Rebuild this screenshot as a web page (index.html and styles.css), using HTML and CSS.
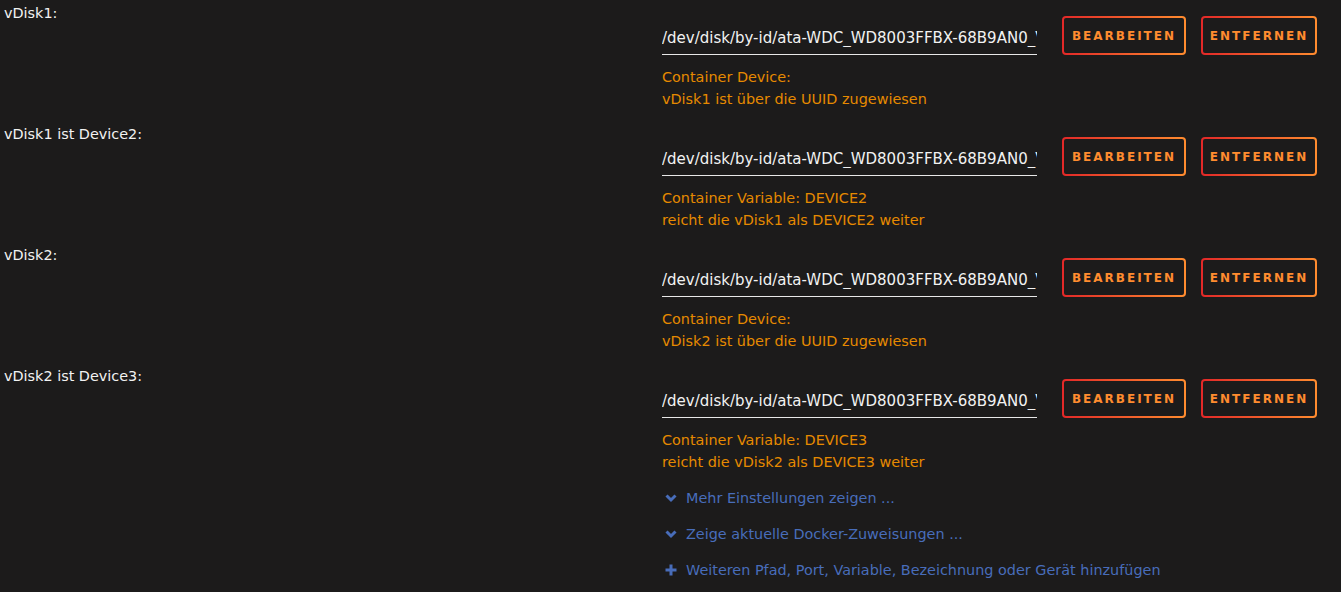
FILE: index.html
```html
<!DOCTYPE html>
<html lang="de">
<head>
    <meta charset="UTF-8">
    <meta name="viewport" content="width=device-width, initial-scale=1.0">
    <title>Docker Container bearbeiten</title>
    <link rel="stylesheet" href="styles.css">
</head>
<body>
    <div class="config-list">
        <div class="config-row">
            <div class="config-label">vDisk1:</div>
            <div class="config-value">
                <div class="controls">
                    <input type="text" class="path-input" value="/dev/disk/by-id/ata-WDC_WD8003FFBX-68B9AN0_VGK1XJ4G" readonly>
                    <button class="btn btn-edit">Bearbeiten</button>
                    <button class="btn btn-remove">Entfernen</button>
                </div>
                <div class="description">Container Device:<br>vDisk1 ist über die UUID zugewiesen</div>
            </div>
        </div>
        <div class="config-row">
            <div class="config-label">vDisk1 ist Device2:</div>
            <div class="config-value">
                <div class="controls">
                    <input type="text" class="path-input" value="/dev/disk/by-id/ata-WDC_WD8003FFBX-68B9AN0_VGK1XJ4G" readonly>
                    <button class="btn btn-edit">Bearbeiten</button>
                    <button class="btn btn-remove">Entfernen</button>
                </div>
                <div class="description">Container Variable: DEVICE2<br>reicht die vDisk1 als DEVICE2 weiter</div>
            </div>
        </div>
        <div class="config-row">
            <div class="config-label">vDisk2:</div>
            <div class="config-value">
                <div class="controls">
                    <input type="text" class="path-input" value="/dev/disk/by-id/ata-WDC_WD8003FFBX-68B9AN0_VGK2ZL7P" readonly>
                    <button class="btn btn-edit">Bearbeiten</button>
                    <button class="btn btn-remove">Entfernen</button>
                </div>
                <div class="description">Container Device:<br>vDisk2 ist über die UUID zugewiesen</div>
            </div>
        </div>
        <div class="config-row">
            <div class="config-label">vDisk2 ist Device3:</div>
            <div class="config-value">
                <div class="controls">
                    <input type="text" class="path-input" value="/dev/disk/by-id/ata-WDC_WD8003FFBX-68B9AN0_VGK2ZL7P" readonly>
                    <button class="btn btn-edit">Bearbeiten</button>
                    <button class="btn btn-remove">Entfernen</button>
                </div>
                <div class="description">Container Variable: DEVICE3<br>reicht die vDisk2 als DEVICE3 weiter</div>
            </div>
        </div>
    </div>

    <div class="more-links">
        <a href="#" class="more-link">
            <svg class="icon" viewBox="0 0 12 12"><path d="M1.5 3.5 L6 8 L10.5 3.5" fill="none" stroke="currentColor" stroke-width="3"/></svg>
            Mehr Einstellungen zeigen ...
        </a>
        <a href="#" class="more-link">
            <svg class="icon" viewBox="0 0 12 12"><path d="M1.5 3.5 L6 8 L10.5 3.5" fill="none" stroke="currentColor" stroke-width="3"/></svg>
            Zeige aktuelle Docker-Zuweisungen ...
        </a>
        <a href="#" class="more-link">
            <svg class="icon" viewBox="0 0 12 12"><path d="M6 0.5 V11.5 M0.5 6 H11.5" fill="none" stroke="currentColor" stroke-width="3"/></svg>
            Weiteren Pfad, Port, Variable, Bezeichnung oder Gerät hinzufügen
        </a>
    </div>
</body>
</html>
```

FILE: styles.css
```css
body {
    font-family: "DejaVu Sans", sans-serif;
    font-size: 14.4px;
    margin: 0;
    padding: 0 0 0 4px;
    background-color: #1c1b1b;
    color: #f2f2f2;
}

.config-row {
    display: flex;
}

.config-label {
    width: 658px;
    line-height: 26px;
    flex-shrink: 0;
}

.config-value {
    padding-top: 16px;
    padding-bottom: 11px;
}

.controls {
    display: flex;
    align-items: center;
    height: 39px;
}

.path-input {
    width: 375px;
    box-sizing: border-box;
    height: 39px;
    padding: 6px 0 0 0;
    background: transparent;
    border: none;
    border-bottom: 1px solid #e8e8e8;
    color: #f2f2f2;
    font-family: inherit;
    font-size: 15px;
    outline: none;
    margin-right: 25px;
}

.btn {
    height: 39px;
    padding: 0;
    border: 2px solid transparent;
    border-radius: 4px;
    background:
        linear-gradient(#1c1b1b, #1c1b1b) padding-box,
        linear-gradient(90deg, #e22828, #ff8c2f) border-box;
    color: #ff8c2f;
    font-family: inherit;
    font-size: 12px;
    font-weight: bold;
    letter-spacing: 2px;
    text-transform: uppercase;
    cursor: pointer;
}

.btn-edit {
    width: 124px;
    margin-right: 15px;
}

.btn-remove {
    width: 116px;
}

.description {
    margin-top: 11px;
    line-height: 22px;
    color: #e68a00;
}

.more-links {
    display: flex;
    flex-direction: column;
    gap: 8px;
    padding-left: 658px;
}

.more-link {
    display: flex;
    align-items: center;
    gap: 9px;
    line-height: 28px;
    color: #486dba;
    text-decoration: none;
}

.more-link .icon {
    width: 12px;
    height: 12px;
    margin-left: 3px;
}
```
